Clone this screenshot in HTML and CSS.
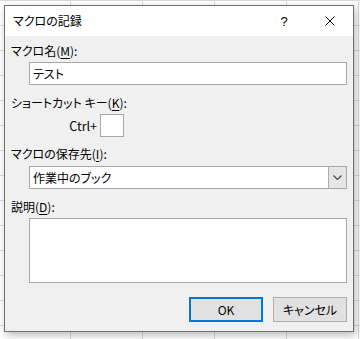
FILE: index.html
```html
<!DOCTYPE html>
<html lang="ja">
  <head>
    <meta charset="UTF-8" />
    <meta name="viewport" content="width=device-width, initial-scale=1.0" />
    <title>マクロの記録</title>
    <link rel="stylesheet" href="styles.css">
  </head>
  <body>
    <div class="dialog">
      <div class="titlebar">
        <span class="title">マクロの記録</span>
        <span class="title-btn help">?</span>
        <span class="title-btn close">
          <svg width="10" height="10" viewBox="0 0 10 10">
            <path d="M0.5 0.5 L9.5 9.5 M9.5 0.5 L0.5 9.5" stroke="#000" stroke-width="1" fill="none" />
          </svg>
        </span>
      </div>

      <div class="content">
        <div class="label label-name">マクロ名(<u>M</u>):</div>
        <div class="field field-name">テスト</div>

        <div class="label label-key">ショートカット キー(<u>K</u>):</div>
        <div class="shortcut-row">
          <span class="ctrl">Ctrl+</span>
          <span class="key-box"></span>
        </div>

        <div class="label label-store">マクロの保存先(<u>I</u>):</div>
        <div class="combo">
          <span class="combo-text">作業中のブック</span>
          <span class="combo-arrow">
            <svg width="9" height="6" viewBox="0 0 9 6">
              <path d="M0.5 0.5 L4.5 4.5 L8.5 0.5" stroke="#444" stroke-width="1.2" fill="none" />
            </svg>
          </span>
        </div>

        <div class="label label-desc">説明(<u>D</u>):</div>
        <div class="textarea"></div>

        <div class="buttons">
          <button class="btn btn-default">OK</button>
          <button class="btn">キャンセル</button>
        </div>
      </div>
    </div>
  </body>
</html>
```

FILE: styles.css
```css
:root {
  --face: #f0f0f0;
  --edge: #adadad;
  --btn: #e1e1e1;
  --blue: #0078d7;
  --grid: #dadada;
}

body {
  margin: 0;
  width: 360px;
  height: 339px;
  overflow: hidden;
  font-family: "Noto Sans CJK JP", "Noto Sans", sans-serif;
  font-size: 12px;
  font-feature-settings: "palt";
  color: #000;
  background-color: #fff;
  background-image:
    linear-gradient(to right, var(--grid) 1px, transparent 1px),
    linear-gradient(to bottom, var(--grid) 1px, transparent 1px);
  background-size: 72px 100%, 100% 25px;
  background-position: 70px 0, 0 0;
}

.dialog {
  margin: 5px 0 0 4px;
  width: 348px;
  height: 325px;
  border: 1px solid #707070;
  background: var(--face);
  box-shadow: 2px 3px 8px rgba(0, 0, 0, 0.28);
}

.titlebar {
  display: flex;
  align-items: center;
  height: 30px;
  background: #fff;
}

.title {
  flex: 1;
  padding-left: 8px;
  line-height: 16px;
}

.title-btn {
  display: flex;
  justify-content: center;
  align-items: center;
  width: 46px;
  height: 30px;
}

.help {
  font-family: "Liberation Sans", sans-serif;
  font-size: 13px;
}

.content {
  padding: 0 6px;
}

.label {
  height: 16px;
  line-height: 16px;
  white-space: nowrap;
}

.label u {
  text-underline-offset: 2px;
}

.label-name { margin-top: 7px; }
.label-key { margin-top: 10px; }
.label-store { margin-top: 9px; }
.label-desc { margin-top: 10px; }

.field,
.combo,
.textarea {
  box-sizing: border-box;
  margin-left: 18px;
  width: 318px;
  background: #fff;
  border: 1px solid #a8a8a8;
}

.field {
  margin-top: 3px;
  height: 23px;
  line-height: 21px;
  padding-left: 3px;
}

.shortcut-row {
  display: flex;
  align-items: center;
  margin: 3px 0 0 18px;
  height: 23px;
}

.ctrl {
  width: 68px;
  text-align: right;
  font-size: 12.5px;
}

.key-box {
  box-sizing: border-box;
  margin-left: 3px;
  width: 24px;
  height: 23px;
  background: #fff;
  border: 1px solid #a8a8a8;
}

.combo {
  display: flex;
  margin-top: 4px;
  height: 23px;
}

.combo-text {
  flex: 1;
  padding-left: 3px;
  line-height: 21px;
}

.combo-arrow {
  display: flex;
  justify-content: center;
  align-items: center;
  width: 17px;
  background: #e5e5e5;
  border-left: 1px solid var(--edge);
}

.textarea {
  margin-top: 3px;
  height: 65px;
}

.buttons {
  display: flex;
  justify-content: flex-end;
  gap: 10px;
  margin-top: 14px;
}

.btn {
  box-sizing: border-box;
  width: 74px;
  height: 25px;
  padding: 0;
  font: inherit;
  font-feature-settings: "palt";
  color: #000;
  background: var(--btn);
  border: 1px solid var(--edge);
}

.btn-default {
  border: 2px solid var(--blue);
}
```
